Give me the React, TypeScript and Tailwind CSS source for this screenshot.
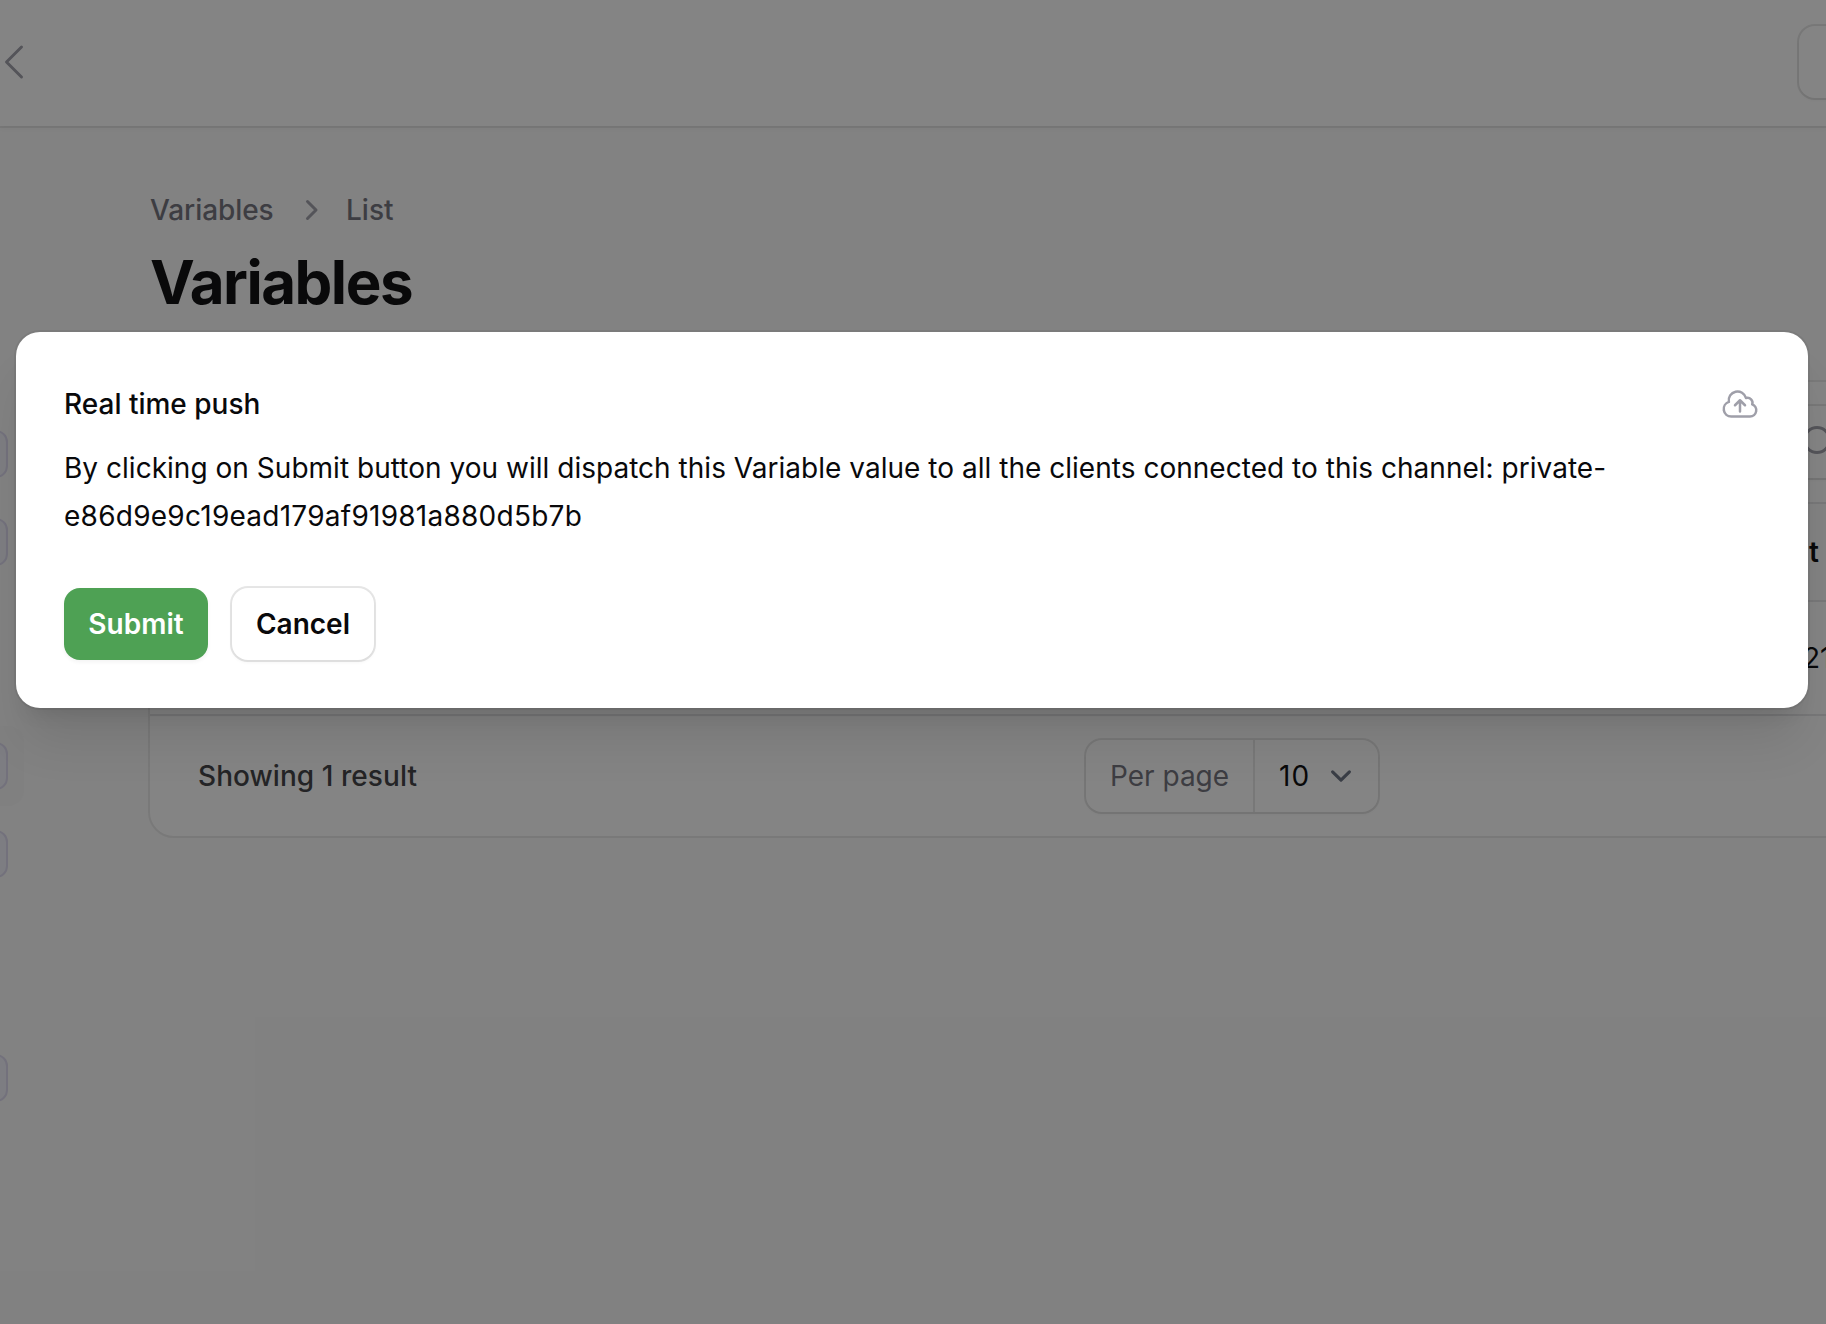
import React from "react";

const SIDEBAR_BADGES = [
  { space: "h-[430px]", active: false },
  { space: "h-10", active: false },
  { space: "h-44", active: true },
  { space: "h-10", active: false },
  { space: "h-44", active: false },
];

function Topbar() {
  return (
    <header className="relative flex h-[126px] shrink-0 items-start justify-between bg-white shadow-[0_0_0_2px_rgba(9,9,9,0.08),0_2px_6px_rgba(0,0,0,0.04)]">
      <svg className="-ml-[10px] mt-[38px] size-12 text-zinc-400" viewBox="0 0 24 24" fill="none" stroke="currentColor" strokeWidth="1.5" strokeLinecap="round" strokeLinejoin="round">
        <path d="M15.75 19.5 8.25 12l7.5-7.5" />
      </svg>
      <div className="-mr-[200px] mt-[26px] h-[72px] w-[227px] rounded-2xl bg-white shadow-[0_0_0_2px_rgba(9,9,9,0.1),0_2px_4px_rgba(0,0,0,0.05)]" />
    </header>
  );
}

function Badge() {
  return <div className="-ml-10 h-12 w-12 rounded-xl border-2 border-[#dcd9ee] bg-[#f0f1fa]" />;
}

function Sidebar() {
  return (
    <aside className="-mt-[128px] w-6 shrink-0">
      {SIDEBAR_BADGES.map((b, i) => (
        <div key={i}>
          <div className={b.space} />
          <div className={b.active ? "-my-4 rounded-r-2xl bg-[#f6f6f6] py-4" : ""}>
            <Badge />
          </div>
        </div>
      ))}
    </aside>
  );
}

function PerPage() {
  return (
    <div className="flex h-[72px] w-[292px] rounded-2xl bg-white shadow-[0_0_0_2px_rgba(9,9,9,0.1),0_2px_4px_rgba(0,0,0,0.05)]">
      <div className="flex w-[169px] items-center border-r-2 border-[#e6e6e6] pl-6 text-zinc-500">Per page</div>
      <div className="flex flex-1 items-center justify-between pl-6 pr-4 text-zinc-950">
        <span className="tracking-[1px]">10</span>
        <svg className="size-[42px] text-gray-500" viewBox="0 0 20 20" fill="none" stroke="currentColor" strokeWidth="1.5" strokeLinecap="round" strokeLinejoin="round">
          <path d="m6 8 4 4 4-4" />
        </svg>
      </div>
    </div>
  );
}

function TableCard() {
  return (
    <section className="-ml-0.5 mt-[62px] w-[1900px] overflow-hidden rounded-[26px] border-2 border-[#e9e9e9] bg-white">
      <div className="flex h-[122px] border-b-2 border-zinc-200 pt-6">
        <div className="ml-[1625px] flex h-[72px] w-[240px] items-center rounded-2xl pl-6 shadow-[0_0_0_2px_rgba(9,9,9,0.1),0_2px_4px_rgba(0,0,0,0.05)]">
          <svg className="size-10 text-zinc-400" viewBox="0 0 20 20" fill="none" stroke="currentColor" strokeWidth="1.5" strokeLinecap="round">
            <circle cx="9" cy="9" r="6.25" />
            <path d="m13.5 13.5 4 4" />
          </svg>
        </div>
      </div>
      <div className="flex h-[98px] items-center border-b-2 border-zinc-200 bg-zinc-50 pl-[1659px] font-semibold text-zinc-950">t</div>
      <div className="flex h-[114px] items-center border-b-2 border-zinc-200 pl-[1653px] text-zinc-950">21</div>
      <div className="flex h-[120px] items-center pl-12">
        <span className="w-[888px] font-medium tracking-[0.06px] text-[#3f3f43]">Showing 1 result</span>
        <PerPage />
      </div>
    </section>
  );
}

function PushModal() {
  return (
    <div className="absolute inset-0 z-10 bg-[#090909]/50 px-4 pt-[332px]">
      <div role="dialog" className="flex h-[376px] w-[1792px] flex-col rounded-3xl bg-white p-12 shadow-[0_0_0_2px_rgba(9,9,9,0.05),0_40px_50px_-10px_rgba(0,0,0,0.1),0_16px_20px_-12px_rgba(0,0,0,0.1)]">
        <div className="flex h-12 items-center justify-between">
          <h2 className="font-medium text-zinc-950">Real time push</h2>
          <svg className="size-10 text-zinc-400" viewBox="0 0 24 24" fill="none" stroke="currentColor" strokeWidth="1.5" strokeLinecap="round" strokeLinejoin="round">
            <path d="M12 16.5V9.75m0 0 3 3m-3-3-3 3M6.75 19.5a4.5 4.5 0 0 1-1.41-8.775 5.25 5.25 0 0 1 10.233-2.33 3 3 0 0 1 3.758 3.848A3.752 3.752 0 0 1 18 19.5H6.75Z" />
          </svg>
        </div>
        <p className="mt-4 leading-[48px] text-zinc-950">
          <span className="tracking-[0.025px]">
            By clicking on Submit button you will dispatch this Variable value to all the clients connected to this channel: private-
          </span>
          <br />
          <span className="tracking-[0.25px]">e86d9e9c19ead179af91981a880d5b7b</span>
        </p>
        <div className="mt-12 flex gap-6">
          <button className="h-[72px] w-36 rounded-2xl bg-[#4ea154] font-semibold text-white shadow-[0_2px_4px_rgba(0,0,0,0.05)]">Submit</button>
          <button className="h-[72px] w-[142px] rounded-2xl bg-white font-semibold text-zinc-950 shadow-[0_0_0_2px_rgba(9,9,9,0.1),0_2px_4px_rgba(0,0,0,0.05)]">Cancel</button>
        </div>
      </div>
    </div>
  );
}

export default function App() {
  return (
    <div className="relative flex h-[1324px] w-[1826px] flex-col overflow-hidden bg-zinc-50 font-['Inter',sans-serif] text-[28px] leading-10 antialiased [font-variation-settings:'opsz'_14]">
      <Topbar />
      <div className="flex flex-1 pt-0.5">
        <Sidebar />
        <main className="ml-[126px] w-0 flex-1 pt-[62px]">
          <nav className="flex h-10 items-center font-medium text-zinc-500">
            <span className="w-[140px] tracking-[-0.08px]">Variables</span>
            <svg className="mr-4 size-10 text-zinc-400" viewBox="0 0 20 20" fill="none" stroke="currentColor" strokeWidth="1.5" strokeLinecap="round" strokeLinejoin="round">
              <path d="M8.75 5.75 13 10l-4.25 4.25" />
            </svg>
            <span>List</span>
          </nav>
          <h1 className="mt-4 text-[60px] leading-[72px] font-bold tracking-tight text-zinc-950">Variables</h1>
          <TableCard />
        </main>
      </div>
      <PushModal />
    </div>
  );
}
